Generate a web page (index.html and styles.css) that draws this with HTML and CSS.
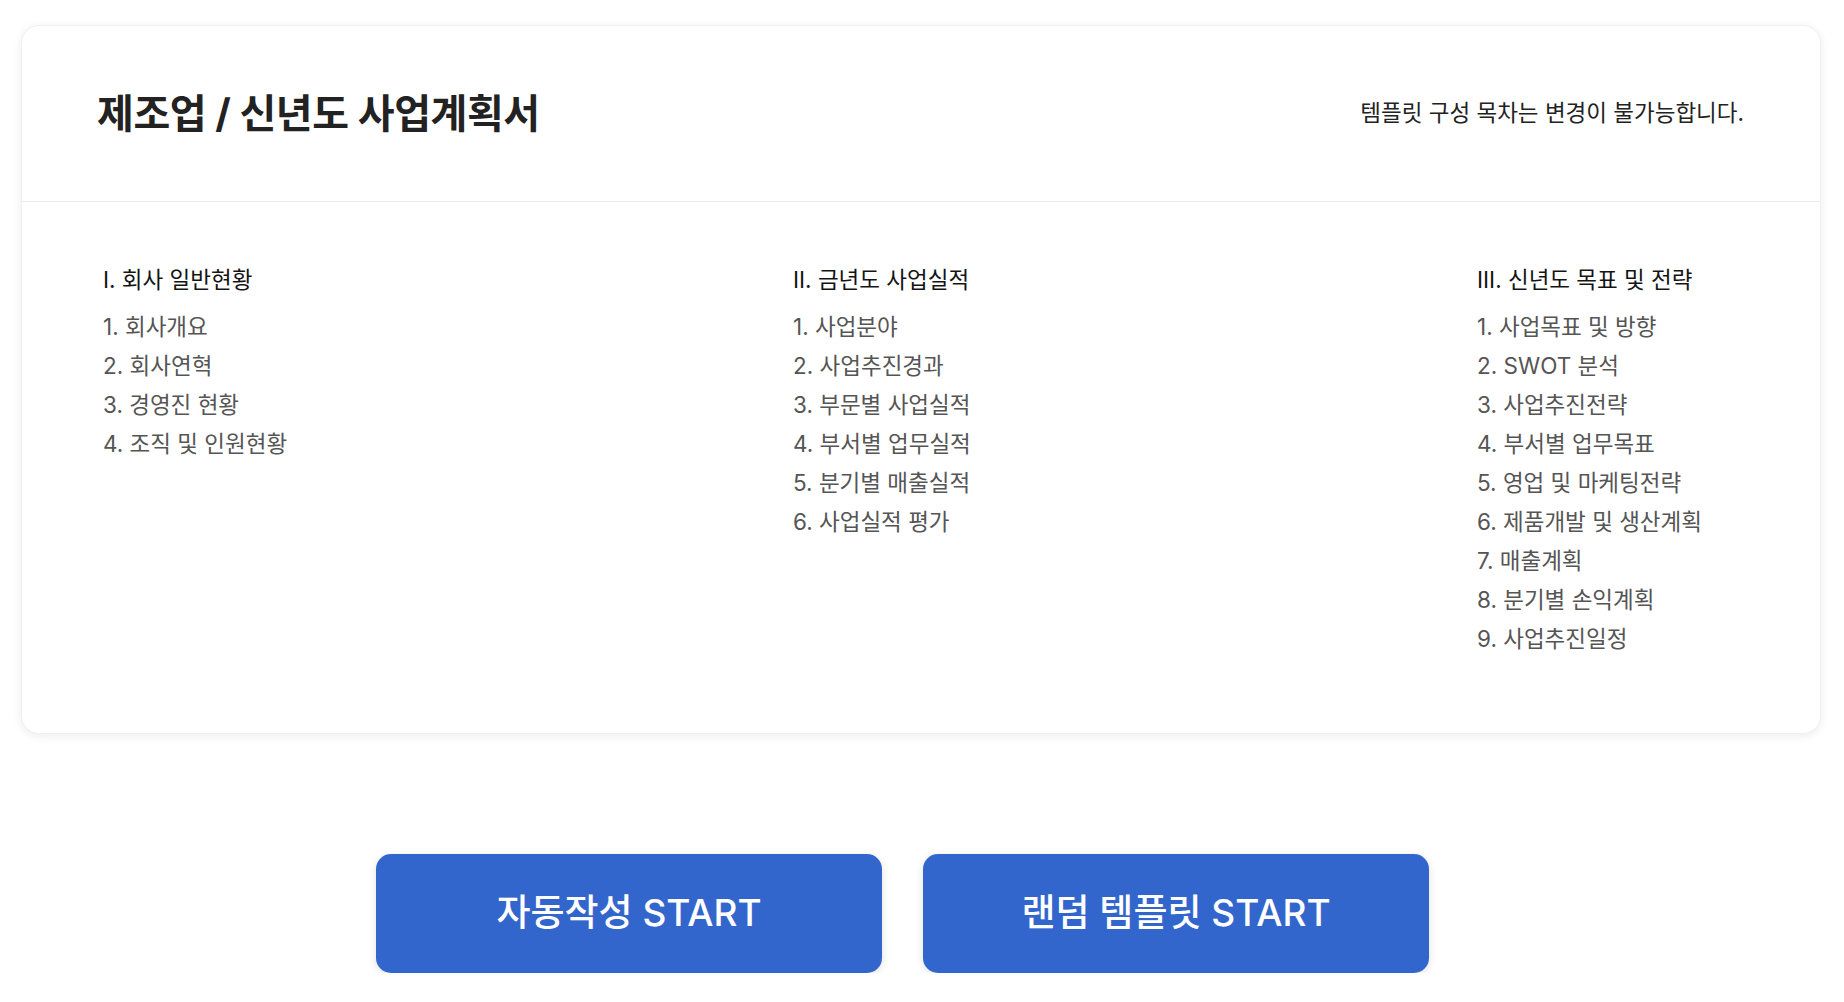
FILE: index.html
```html
<!DOCTYPE html>
<html lang="ko">
<head>
<meta charset="utf-8">
<title>제조업 / 신년도 사업계획서</title>
<link rel="stylesheet" href="styles.css">
</head>
<body>
<div class="page">
  <section class="card">
    <header class="card-head">
      <h1 class="title">제조업 / 신년도 사업계획서</h1>
      <p class="note">템플릿 구성 목차는 변경이 불가능합니다.</p>
    </header>
    <div class="toc">
      <div class="col">
        <h2 class="col-title">I. 회사 일반현황</h2>
        <ul class="items">
          <li>1. 회사개요</li>
          <li>2. 회사연혁</li>
          <li>3. 경영진 현황</li>
          <li>4. 조직 및 인원현황</li>
        </ul>
      </div>
      <div class="col">
        <h2 class="col-title">II. 금년도 사업실적</h2>
        <ul class="items">
          <li>1. 사업분야</li>
          <li>2. 사업추진경과</li>
          <li>3. 부문별 사업실적</li>
          <li>4. 부서별 업무실적</li>
          <li>5. 분기별 매출실적</li>
          <li>6. 사업실적 평가</li>
        </ul>
      </div>
      <div class="col">
        <h2 class="col-title">III. 신년도 목표 및 전략</h2>
        <ul class="items">
          <li>1. 사업목표 및 방향</li>
          <li>2. SWOT 분석</li>
          <li>3. 사업추진전략</li>
          <li>4. 부서별 업무목표</li>
          <li>5. 영업 및 마케팅전략</li>
          <li>6. 제품개발 및 생산계획</li>
          <li>7. 매출계획</li>
          <li>8. 분기별 손익계획</li>
          <li>9. 사업추진일정</li>
        </ul>
      </div>
    </div>
  </section>
  <div class="actions">
    <button class="btn" type="button">자동작성 START</button>
    <button class="btn" type="button">랜덤 템플릿 START</button>
  </div>
</div>
</body>
</html>
```
FILE: styles.css
```css
* { box-sizing: border-box; }
html, body { margin: 0; padding: 0; background: #fff; }
body {
  font-family: "Inter", "Noto Sans CJK KR", sans-serif;
  color: #222;
}
.page {
  padding: 25px 23px 0 21px;
}
.card {
  background: #fff;
  border-radius: 18px;
  box-shadow: 0 2px 10px rgba(0, 0, 0, 0.08);
  border: 1px solid #f0f0f0;
}
.card-head {
  height: 176px;
  display: flex;
  align-items: center;
  justify-content: space-between;
  padding: 0 76px 6px 75px;
  border-bottom: 1px solid #ececec;
}
.title {
  margin: 0;
  font-size: 40px;
  font-weight: 700;
  letter-spacing: -0.4px;
  color: #222;
}
.note {
  margin: 0;
  font-size: 22.5px;
  font-weight: 400;
  color: #222;
}
.toc {
  display: grid;
  grid-template-columns: 690px 684px 1fr;
  padding: 58px 40px 75px 81px;
}
.col-title {
  margin: 0 0 8px;
  font-size: 22.5px;
  font-weight: 400;
  line-height: 39px;
  color: #141414;
}
.items {
  list-style: none;
  margin: 0;
  padding: 0;
}
.items li {
  font-size: 22.5px;
  line-height: 39px;
  color: #555;
}
.actions {
  display: flex;
  justify-content: center;
  padding: 120px 0 0 4px;
}
.btn {
  width: 506px;
  height: 119px;
  margin-right: 41px;
  padding: 0 0 8px;
  border: none;
  border-radius: 15px;
  background: #3366cc;
  color: #fff;
  font-family: "Inter", "Noto Sans CJK KR", sans-serif;
  font-size: 37px;
  font-weight: 500;
  box-shadow: 0 2px 8px rgba(0, 0, 0, 0.12);
  cursor: pointer;
}
```
